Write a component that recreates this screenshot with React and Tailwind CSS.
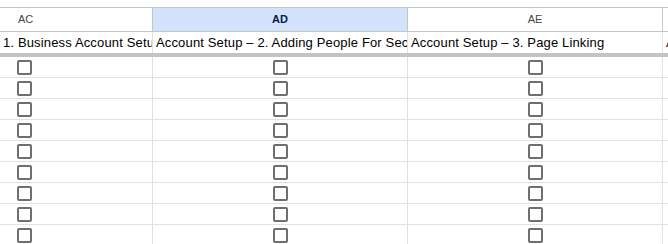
const columns = [
  { label: "AC", width: "w-[153px]", text: "1. Business Account Setup", boxLeft: "pl-[17px]", head: "pl-[18px] justify-start" },
  { label: "AD", width: "w-[255px]", text: "Account Setup – 2. Adding People For Security", selected: true },
  { label: "AE", width: "w-[255px]", text: "Account Setup – 3. Page Linking" },
  { label: "AF", width: "w-[255px]", text: "Account Setup – 4. Ads" },
];

const rows = Array.from({ length: 9 }, (_, index) => index);

const Checkbox = () => (
  <div className="h-[15px] w-[15px] rounded-[2px] border-2 border-[#6f6f6f] bg-white" />
);

export default function App() {
  return (
    <div
      className="h-[244px] w-[668px] overflow-hidden bg-white"
      style={{ fontFamily: '"Liberation Sans", Arial, sans-serif' }}
    >
      <div className="h-[8px] border-b border-[#c4c7c5]" />
      <div className="flex">
        {columns.map((col) => (
          <div
            key={col.label}
            className={`${col.width} flex h-[24px] shrink-0 items-center border-r border-b border-[#c4c7c5] text-[11px] ${
              col.head ? col.head : "justify-center"
            } ${col.selected ? "bg-[#d3e3fd] font-bold text-[#041e49]" : "text-[#444746]"}`}
          >
            {col.label}
          </div>
        ))}
      </div>
      <div className="flex">
        {columns.map((col) => (
          <div
            key={col.label}
            className={`${col.width} flex h-[21px] shrink-0 items-center overflow-hidden whitespace-nowrap border-r border-[#e1e1e1] pl-[3px] text-[13px] tracking-[0.15px] text-black`}
          >
            {col.text}
          </div>
        ))}
      </div>
      <div className="h-[4px] bg-[#c4c4c4]" />
      {rows.map((row) => (
        <div key={row} className="flex">
          {columns.map((col, index) => (
            <div
              key={col.label}
              className={`${col.width} flex h-[21px] shrink-0 items-center border-r border-b border-[#e1e1e1] ${
                col.boxLeft ? col.boxLeft : "justify-center"
              }`}
            >
              {index < 3 ? <Checkbox /> : null}
            </div>
          ))}
        </div>
      ))}
    </div>
  );
}
